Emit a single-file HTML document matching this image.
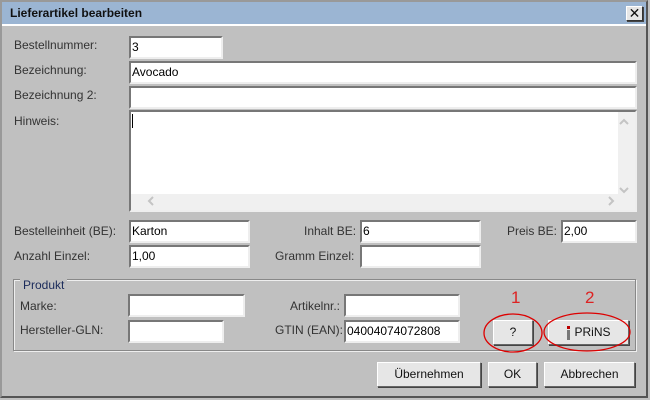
<!DOCTYPE html><html><head><style>
body{margin:0;width:650px;height:400px;background:#c0c0c0;font-family:"Liberation Sans",sans-serif;font-size:12px;color:#333;position:relative;overflow:hidden}
.a{position:absolute}
.win{left:0;top:0;width:648px;height:398px;border-right:2px solid #555;border-bottom:2px solid #555;border-top:2px solid #999;border-left:2px solid #999;box-sizing:border-box}
.t{left:2px;top:2px;width:644px;height:22px;background:#9bb5d3;border-bottom:2px solid #fff;font-weight:bold;color:#111;font-size:12px;line-height:22px;text-indent:8px}
.in{background:#fff;box-sizing:border-box;border-top:2px solid #777;border-left:2px solid #777;border-right:2px solid #eee;border-bottom:2px solid #eee;color:#000;line-height:18px;padding-left:1px;font-size:12px}
.l{line-height:14px}
.b{box-sizing:border-box;background:#e6e6e6;border:1px solid #666;border-top-color:#fff;border-left-color:#fff;box-shadow:1px 1px 0 #444;text-align:center;color:#111;font-size:12px}
</style></head><body>
<div class="a win"></div>
<div class="a t">Lieferartikel bearbeiten</div>
<div class="a b" style="left:626px;top:6px;width:17px;height:15px;line-height:13px;font-size:14px;border:1px solid #333;border-top-color:#fff;border-left-color:#fff">✕</div>
<div class="a l" style="left:14px;top:38px">Bestellnummer:</div>
<div class="a in" style="left:129px;top:36px;width:94px;height:23px">3</div>
<div class="a l" style="left:14px;top:63px">Bezeichnung:</div>
<div class="a in" style="left:129px;top:61px;width:508px;height:23px">Avocado</div>
<div class="a l" style="left:14px;top:88px">Bezeichnung 2:</div>
<div class="a in" style="left:129px;top:86px;width:508px;height:23px"></div>
<div class="a l" style="left:14px;top:114px">Hinweis:</div>
<div class="a in" style="left:129px;top:110px;width:508px;height:102px;padding:0">
<div class="a" style="left:1px;top:2px;width:1px;height:14px;background:#000"></div>
<div class="a" style="right:0;top:0;width:17px;height:98px;background:#f0f0f0"></div>
<div class="a" style="left:0;bottom:0;width:504px;height:16px;background:#f0f0f0"></div>
<svg class="a" style="left:0;top:0" width="504" height="98"><g fill="none" stroke="#c4c4c4" stroke-width="2"><path d="M489 12l4-4 4 4"/><path d="M489 76l4 4 4-4"/><path d="M22 85l-4 4 4 4"/><path d="M478 85l4 4-4 4"/></g></svg>
</div>
<div class="a l" style="left:14px;top:224px">Bestelleinheit (BE):</div>
<div class="a in" style="left:129px;top:220px;width:121px;height:23px">Karton</div>
<div class="a l" style="left:304px;top:224px">Inhalt BE:</div>
<div class="a in" style="left:360px;top:220px;width:121px;height:23px">6</div>
<div class="a l" style="left:507px;top:224px">Preis BE:</div>
<div class="a in" style="left:561px;top:220px;width:76px;height:23px">2,00</div>
<div class="a l" style="left:14px;top:249px">Anzahl Einzel:</div>
<div class="a in" style="left:129px;top:245px;width:121px;height:23px">1,00</div>
<div class="a l" style="left:275px;top:249px">Gramm Einzel:</div>
<div class="a in" style="left:360px;top:245px;width:121px;height:23px"></div>
<div class="a" style="left:13px;top:279px;width:623px;height:72px;border:1px solid #888;box-shadow:1px 1px 0 #eee,inset 1px 1px 0 #eee;box-sizing:border-box"></div>
<div class="a l" style="left:20px;top:278px;background:#c0c0c0;padding:0 3px;color:#1a2a5a">Produkt</div>
<div class="a l" style="left:20px;top:299px">Marke:</div>
<div class="a in" style="left:128px;top:294px;width:117px;height:23px"></div>
<div class="a l" style="left:290px;top:299px">Artikelnr.:</div>
<div class="a in" style="left:344px;top:294px;width:116px;height:23px"></div>
<div class="a l" style="left:20px;top:323px">Hersteller-GLN:</div>
<div class="a in" style="left:128px;top:320px;width:96px;height:23px"></div>
<div class="a l" style="left:275px;top:323px">GTIN (EAN):</div>
<div class="a in" style="left:344px;top:320px;width:116px;height:23px">04004074072808</div>
<div class="a b" style="left:493px;top:320px;width:40px;height:25px;line-height:23px">?</div>
<div class="a b" style="left:548px;top:320px;width:81px;height:25px;line-height:23px;padding-left:8px">PRiNS</div>
<div class="a" style="left:567px;top:326px;width:3px;height:3px;background:#b00"></div>
<div class="a" style="left:567px;top:330px;width:3px;height:10px;background:#777"></div>
<div class="a" style="left:511px;top:288px;color:#d22;font-size:17px">1</div>
<div class="a" style="left:585px;top:288px;color:#d22;font-size:17px">2</div>
<svg class="a" style="left:0;top:0" width="650" height="400"><ellipse cx="513" cy="333" rx="29" ry="19" fill="none" stroke="#d00" stroke-width="1.3"/><ellipse cx="587" cy="332" rx="43" ry="19" fill="none" stroke="#d00" stroke-width="1.3"/></svg>
<div class="a b" style="left:377px;top:362px;width:104px;height:25px;line-height:23px">Übernehmen</div>
<div class="a b" style="left:488px;top:362px;width:49px;height:25px;line-height:23px">OK</div>
<div class="a b" style="left:544px;top:362px;width:91px;height:25px;line-height:23px">Abbrechen</div>
</body></html>
